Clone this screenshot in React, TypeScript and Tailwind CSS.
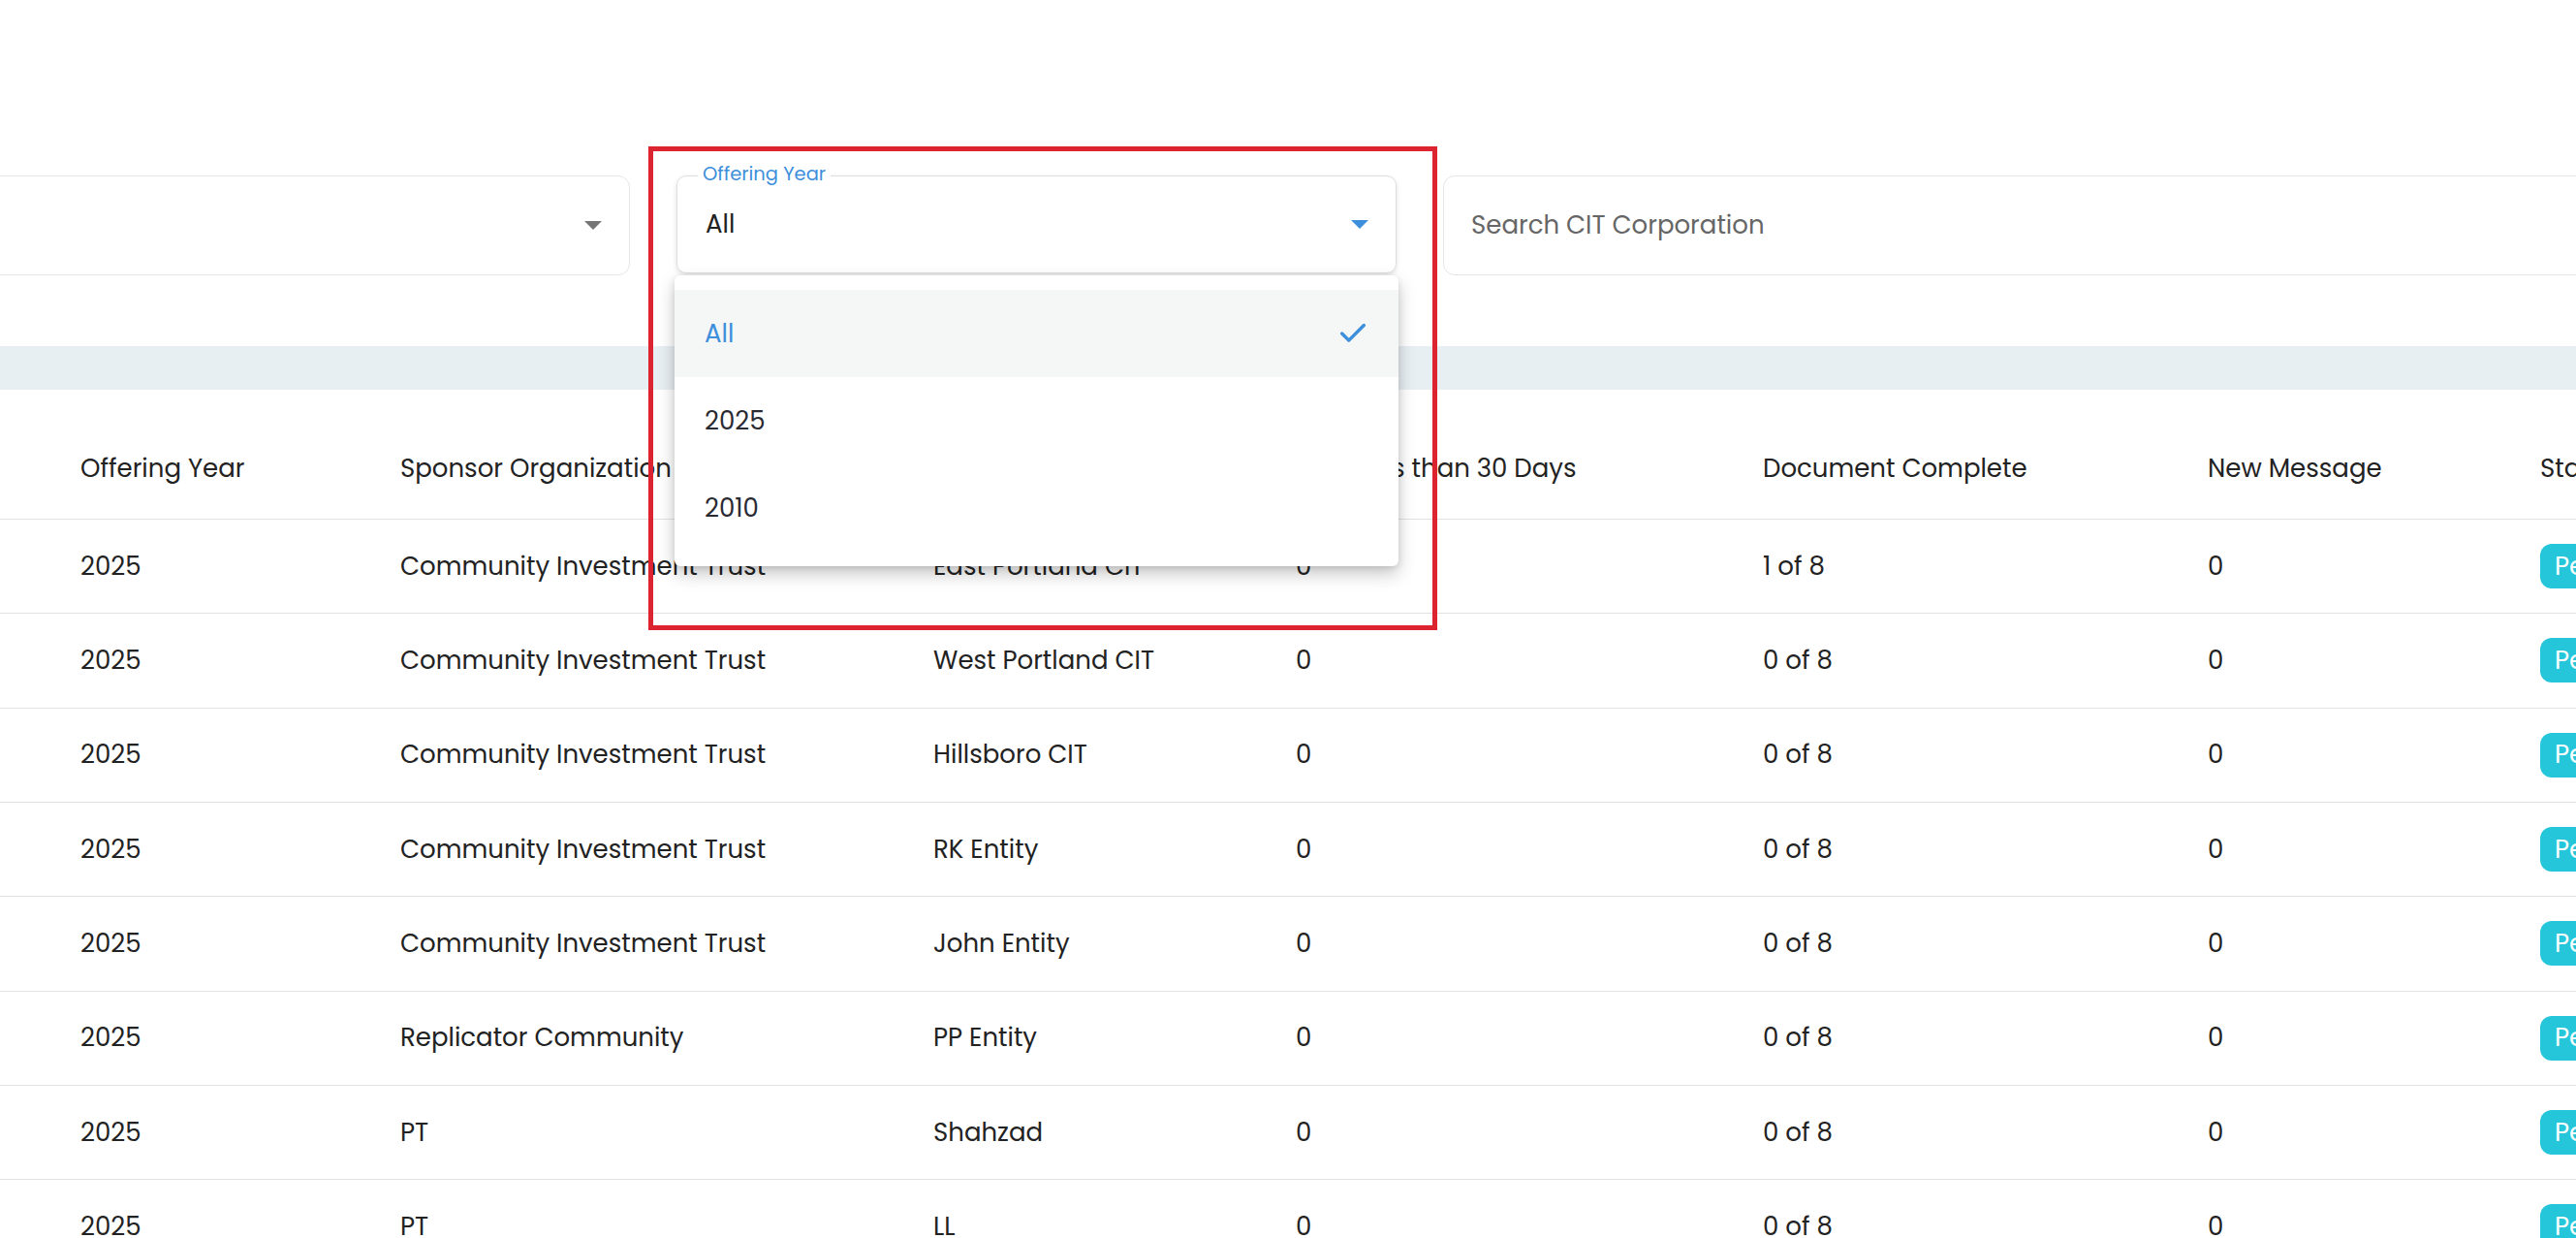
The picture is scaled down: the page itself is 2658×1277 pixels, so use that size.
import { Check } from "lucide-react";

const rows = [
  { year: "2025", sponsor: "Community Investment Trust", entity: "East Portland CIT", due: "0", docs: "1 of 8", msg: "0" },
  { year: "2025", sponsor: "Community Investment Trust", entity: "West Portland CIT", due: "0", docs: "0 of 8", msg: "0" },
  { year: "2025", sponsor: "Community Investment Trust", entity: "Hillsboro CIT", due: "0", docs: "0 of 8", msg: "0" },
  { year: "2025", sponsor: "Community Investment Trust", entity: "RK Entity", due: "0", docs: "0 of 8", msg: "0" },
  { year: "2025", sponsor: "Community Investment Trust", entity: "John Entity", due: "0", docs: "0 of 8", msg: "0" },
  { year: "2025", sponsor: "Replicator Community", entity: "PP Entity", due: "0", docs: "0 of 8", msg: "0" },
  { year: "2025", sponsor: "PT", entity: "Shahzad", due: "0", docs: "0 of 8", msg: "0" },
  { year: "2025", sponsor: "PT", entity: "LL", due: "0", docs: "0 of 8", msg: "0" },
];

const cols = "grid grid-cols-[330px_550px_374px_482px_459px_343px_300px] pl-[83px]";

function Caret({ color }: { color: string }) {
  return (
    <svg width="18" height="9" viewBox="0 0 18 9" className="shrink-0">
      <path d="M0 0h18L9 9z" fill={color} />
    </svg>
  );
}

export default function App() {
  return (
    <div className="relative w-[2658px] h-[1277px] overflow-hidden bg-white text-[#222] font-['Poppins','Open_Sans',sans-serif] text-[26px]">
      {/* Filters */}
      <div className="flex gap-[48px] pt-[181px]">
        <div className="-ml-[50px] w-[700px] h-[103px] shrink-0 rounded-[12px] border border-[#e6e6e6] flex items-center justify-end pr-[28px]">
          <Caret color="#757575" />
        </div>

        <div className="relative w-[743px] h-[101px] shrink-0">
          <div className="h-full rounded-[10px] border border-[#dedede] shadow-[0_2px_5px_rgba(0,0,0,0.12)] flex items-center justify-between pl-[29px] pr-[28px]">
            <span>All</span>
            <Caret color="#3d8fdb" />
          </div>
          <span className="absolute -top-[14px] left-[22px] bg-white px-[5px] text-[19.5px] leading-[26px] text-[#3d8fdb]">
            Offering Year
          </span>

          {/* open menu */}
          <div className="absolute top-[103px] -left-[2px] w-[747px] py-[15px] bg-white rounded-[6px] shadow-[0_8px_18px_rgba(0,0,0,0.22),0_2px_6px_rgba(0,0,0,0.1)] z-10">
            <div className="h-[90px] bg-[#f5f6f6] flex items-center justify-between pl-[31px] pr-[30px] text-[#3d8fdb]">
              <span>All</span>
              <Check size={34} strokeWidth={2.4} color="#3d8fdb" />
            </div>
            <div className="h-[90px] flex items-center pl-[31px] text-[#2a2a33]">2025</div>
            <div className="h-[90px] flex items-center pl-[31px] text-[#2a2a33]">2010</div>
          </div>
        </div>

        <div className="w-[1300px] h-[103px] shrink-0 rounded-[12px] border border-[#e6e6e6] flex items-center pl-[28px] text-[#666]">
          Search CIT Corporation
        </div>
      </div>

      {/* band */}
      <div className="mt-[73px] h-[45px] bg-[#e8eff3]" />

      {/* table */}
      <div className={`${cols} h-[134px] pt-[30px] items-center border-b border-[#e2e2e2]`}>
        <div>Offering Year</div>
        <div>Sponsor Organization</div>
        <div>Entity Name</div>
        <div>Due Less than 30 Days</div>
        <div>Document Complete</div>
        <div>New Message</div>
        <div>Status</div>
      </div>
      {rows.map((r, i) => (
        <div key={i} className={`${cols} h-[97.33px] items-center border-b border-[#e2e2e2]`}>
          <div>{r.year}</div>
          <div>{r.sponsor}</div>
          <div>{r.entity}</div>
          <div>{r.due}</div>
          <div>{r.docs}</div>
          <div>{r.msg}</div>
          <div>
            <span className="inline-flex items-center h-[46px] px-[15px] rounded-[12px] bg-[#26c6da] text-white">Pending</span>
          </div>
        </div>
      ))}

      {/* annotation */}
      <div className="absolute left-[669px] top-[151px] w-[814px] h-[499px] border-[5px] border-[#dc2430] z-20 pointer-events-none" />
    </div>
  );
}
